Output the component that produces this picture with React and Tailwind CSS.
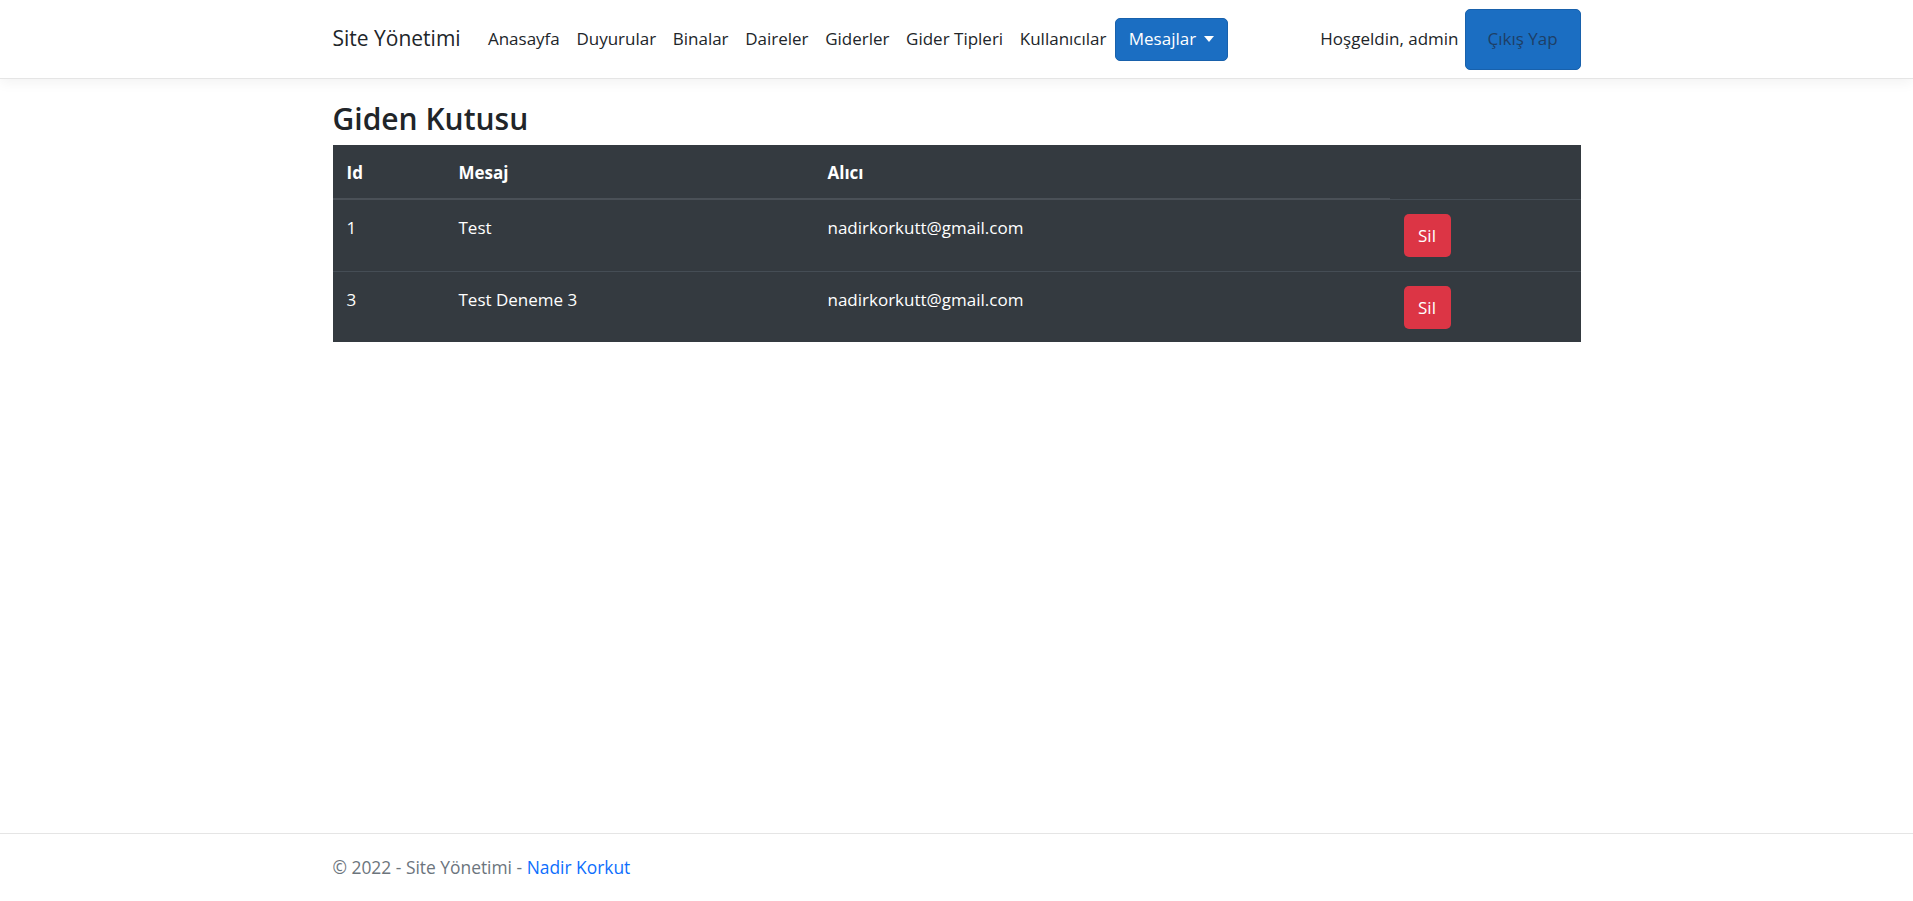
import React from 'react';

const links = ['Anasayfa', 'Duyurular', 'Binalar', 'Daireler', 'Giderler', 'Gider Tipleri', 'Kullanıcılar'];

const rows = [
  { id: 1, mesaj: 'Test', alici: 'nadirkorkutt@gmail.com' },
  { id: 3, mesaj: 'Test Deneme 3', alici: 'nadirkorkutt@gmail.com' },
];

const font = { fontFamily: '"Open Sans", "Noto Sans", Arial, sans-serif' };

const Navbar = () => (
  <header className="bg-white border-b border-[#e5e5e5] shadow-[0_4px_12px_rgba(0,0,0,0.05)]">
    <nav className="w-[1248px] mx-auto h-[78px] flex items-center text-[17px] text-[#212529]">
      <span className="text-[21px] mr-[19px]">Site Yönetimi</span>
      <ul className="flex items-center">
        {links.map((l) => (
          <li key={l}>
            <a className="px-[8.3px] py-[8px] block">{l}</a>
          </li>
        ))}
        <li>
          <button className="h-[43px] px-[13px] rounded-[5px] bg-[#1b6ec2] border border-[#1861ac] text-white flex items-center">
            Mesajlar
            <span className="ml-[8px] w-0 h-0 border-x-[5px] border-x-transparent border-t-[6px] border-t-white" />
          </button>
        </li>
      </ul>
      <div className="ml-auto flex items-center">
        <span className="mr-[6px]">Hoşgeldin, admin</span>
        <button className="h-[61px] w-[116px] rounded-[5px] bg-[#1b6ec2] border border-[#1861ac] text-[#1e3f66]">
          Çıkış Yap
        </button>
      </div>
    </nav>
  </header>
);

const OutboxTable = () => (
  <table className="w-full table-fixed bg-[#343a40] text-white text-[17px] leading-[24px] border-separate border-spacing-0">
    <thead>
      <tr className="text-left">
        <th className="w-[112px] px-[14px] pt-[16px] pb-[13px] font-bold border-b-2 border-[#4a5057]">Id</th>
        <th className="w-[369px] px-[14px] pt-[16px] pb-[13px] font-bold border-b-2 border-[#4a5057]">Mesaj</th>
        <th className="w-[576px] px-[14px] pt-[16px] pb-[13px] font-bold border-b-2 border-[#4a5057]">Alıcı</th>
        <th className="px-[14px] py-[15px] border-b border-[#454d55]"></th>
      </tr>
    </thead>
    <tbody>
      {rows.map((r, i) => {
        const edge = i > 0 ? 'border-t border-[#454d55]' : '';
        const text = `px-[14px] pt-[16px] align-top ${edge}`;
        const btn = `px-[14px] pt-[14px] ${i > 0 ? 'pb-[13px]' : 'pb-[14px]'} align-top ${edge}`;
        return (
          <tr key={r.id}>
            <td className={text}>{r.id}</td>
            <td className={text}>{r.mesaj}</td>
            <td className={text}>{r.alici}</td>
            <td className={btn}>
              <button className="h-[43px] w-[47px] rounded-[5px] bg-[#dc3545] text-white">Sil</button>
            </td>
          </tr>
        );
      })}
    </tbody>
  </table>
);

export default function App() {
  return (
    <div className="min-h-screen flex flex-col bg-white" style={font}>
      <Navbar />
      <main className="flex-1 w-[1248px] mx-auto pt-[22px]">
        <h2 className="text-[30px] font-semibold leading-[1.2] text-[#212529] mb-[8px]">Giden Kutusu</h2>
        <OutboxTable />
      </main>
      <footer className="border-t border-[#e5e5e5] h-[68px] flex items-center">
        <div className="w-[1248px] mx-auto text-[17.4px] text-[#6c757d]">
          © 2022 - Site Yönetimi - <a className="text-[#0d6efd]">Nadir Korkut</a>
        </div>
      </footer>
    </div>
  );
}
